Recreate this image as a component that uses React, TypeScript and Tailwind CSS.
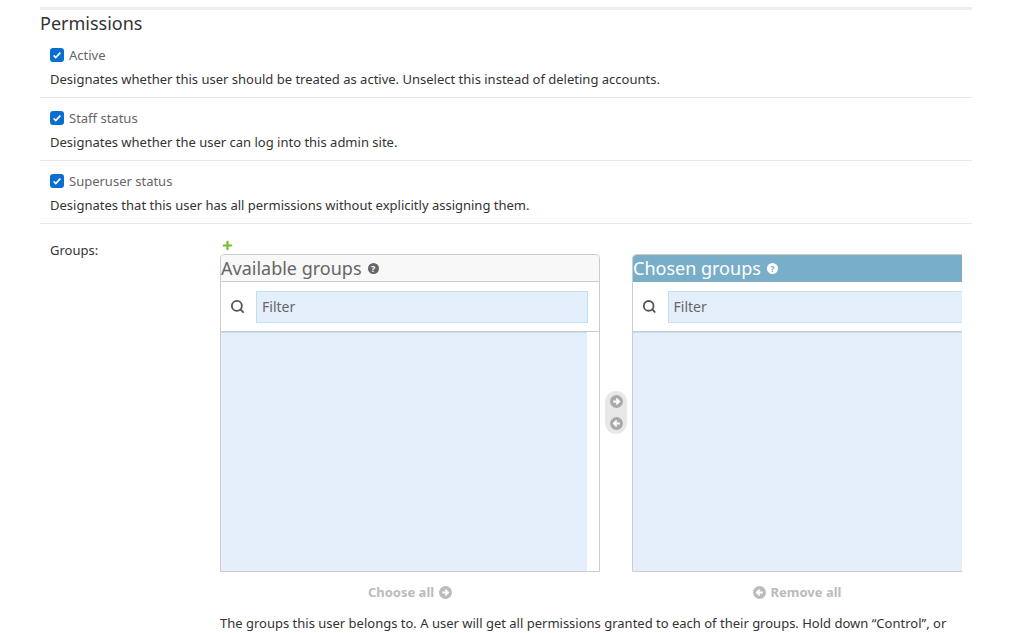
import { Search, Plus } from "lucide-react";

function Check() {
  return (
    <span className="inline-flex h-[14px] w-[14px] items-center justify-center rounded-[3px] bg-[#0a6ed1]">
      <svg viewBox="0 0 12 12" className="h-[10px] w-[10px]">
        <path d="M2 6.5l2.5 2.5L10 3.2" stroke="white" strokeWidth="2" fill="none" />
      </svg>
    </span>
  );
}

function Help({ bg, fg }: { bg: string; fg: string }) {
  return (
    <span className={`inline-flex h-[11px] w-[11px] items-center justify-center rounded-full ${bg}`}>
      <span className={`text-[9px] font-bold leading-none ${fg}`}>?</span>
    </span>
  );
}

function Circle({ dir, color }: { dir: "r" | "l"; color: string }) {
  return (
    <svg viewBox="0 0 14 14" className="h-[13px] w-[13px]">
      <circle cx="7" cy="7" r="7" fill={color} />
      {dir === "r" ? (
        <path d="M3.5 7h6M6.8 4l3 3-3 3" stroke="white" strokeWidth="2" fill="none" />
      ) : (
        <path d="M10.5 7h-6M7.2 4l-3 3 3 3" stroke="white" strokeWidth="2" fill="none" />
      )}
    </svg>
  );
}

function Row({ label, help }: { label: string; help: string }) {
  return (
    <div className="border-b border-[#e8e8e8] px-[10px] pt-[11px] pb-[9px]">
      <div className="flex h-[18px] items-center gap-[5px]">
        <Check />
        <span className="text-[13px] leading-[18px] text-[#666]">{label}</span>
      </div>
      <p className="mt-[6px] text-[13px] leading-[18px] text-[#333]">{help}</p>
    </div>
  );
}

export default function App() {
  return (
    <div className="h-[633px] overflow-hidden bg-white px-[40px] pt-[7px]" style={{ fontFamily: '"Noto Sans", "Open Sans", sans-serif' }}>
      <div className="w-[932px]">
        <div className="h-[3px] bg-[#eee]" />
        <h2 className="mt-[1px] text-[18px] font-normal leading-[24px] text-[#333]">Permissions</h2>
        <Row label="Active" help="Designates whether this user should be treated as active. Unselect this instead of deleting accounts." />
        <Row label="Staff status" help="Designates whether the user can log into this admin site." />
        <Row label="Superuser status" help="Designates that this user has all permissions without explicitly assigning them." />
        <div className="flex px-[10px] pt-[15px]">
          <div className="w-[170px] pt-[3px] text-[13px] leading-[16px] text-[#333]">Groups:</div>
          <div className="w-[742px] overflow-hidden">
            <Plus className="ml-[1px] block h-[13px] w-[13px] text-[#70bf2b]" strokeWidth={4} />
            <div className="mt-[2px] flex w-[760px]">
              <div className="flex w-[380px] flex-col">
                <div className="flex h-[318px] flex-col rounded-t-[4px] border border-[#ccc]">
                  <div className="flex h-[27px] items-center gap-[6px] rounded-t-[4px] border-b border-[#ccc] bg-[#f8f8f8] text-[18px] text-[#666]">
                    <span>Available groups</span>
                    <Help bg="bg-[#666]" fg="text-white" />
                  </div>
                  <div className="flex h-[50px] items-center border-b border-[#ccc] bg-white">
                    <Search className="ml-[9px] h-[15px] w-[15px] text-[#555]" strokeWidth={3} />
                    <div className="ml-[11px] flex h-[32px] w-[332px] items-center border border-[#bde0f2] bg-[#e5effc] px-[5px] text-[14px] text-[#666]">Filter</div>
                  </div>
                  <div className="flex-1 bg-white">
                    <div className="h-full w-[366px] border-t border-[#bde0f2] bg-[#e5effc]" />
                  </div>
                </div>
                <div className="mt-[11px] flex items-center justify-center gap-[5px] text-[13px] font-bold text-[#bbb]">
                  Choose all <Circle dir="r" color="#bbb" />
                </div>
              </div>
              <div className="flex w-[32px] items-start justify-center pt-[137px]">
                <div className="flex w-[22px] flex-col items-center gap-[9px] rounded-[11px] bg-[#e8e8e8] py-[4px]">
                  <Circle dir="r" color="#aaa" />
                  <Circle dir="l" color="#aaa" />
                </div>
              </div>
              <div className="flex w-[348px] flex-col">
                <div className="flex h-[318px] flex-col rounded-t-[4px] border border-[#ccc]">
                  <div className="flex h-[27px] items-center gap-[6px] rounded-t-[4px] bg-[#79aec8] text-[18px] text-white">
                    <span>Chosen groups</span>
                    <Help bg="bg-white" fg="text-[#79aec8]" />
                  </div>
                  <div className="flex h-[50px] items-center border-b border-[#ccc] bg-white">
                    <Search className="ml-[9px] h-[15px] w-[15px] text-[#555]" strokeWidth={3} />
                    <div className="ml-[11px] flex h-[32px] w-[320px] items-center border border-[#bde0f2] bg-[#e5effc] px-[5px] text-[14px] text-[#666]">Filter</div>
                  </div>
                  <div className="flex-1 border-t border-[#bde0f2] bg-[#e5effc]" />
                </div>
                <div className="mt-[11px] flex w-[330px] items-center justify-center gap-[5px] text-[13px] font-bold text-[#bbb]">
                  <Circle dir="l" color="#bbb" /> Remove all
                </div>
              </div>
            </div>
            <p className="mt-[12px] text-[13px] leading-[16px] text-[#333]">
              The groups this user belongs to. A user will get all permissions granted to each of their groups. Hold down “Control”, or “Command” on a Mac, to select more than one.
            </p>
          </div>
        </div>
      </div>
    </div>
  );
}
